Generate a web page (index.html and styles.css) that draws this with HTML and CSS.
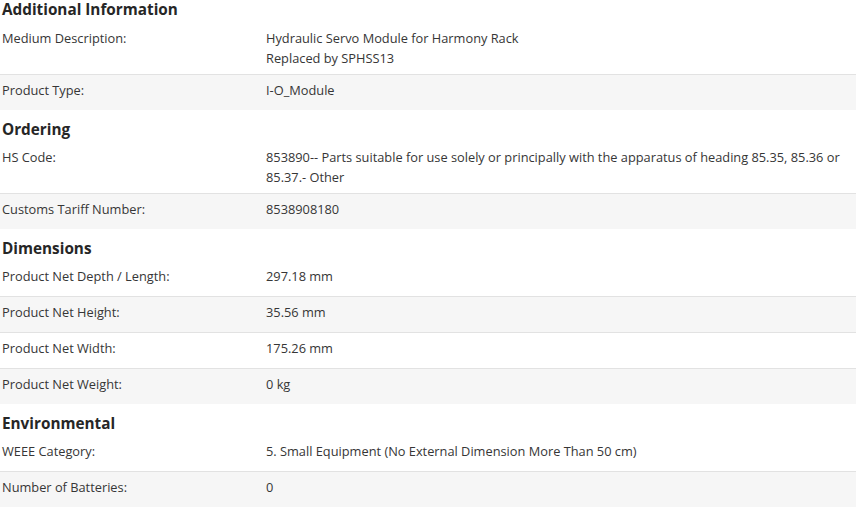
FILE: index.html
```html
<!DOCTYPE html>
<html lang="en">
<head>
<meta charset="utf-8">
<title>Product details</title>
<link rel="stylesheet" href="styles.css">
</head>
<body>
<div class="specs">
  <section class="group">
    <h2 class="group-title">Additional Information</h2>
    <div class="row">
      <div class="label">Medium Description:</div>
      <div class="value">Hydraulic Servo Module for Harmony Rack<br>Replaced by SPHSS13</div>
    </div>
    <div class="row alt">
      <div class="label">Product Type:</div>
      <div class="value">I-O_Module</div>
    </div>
  </section>
  <section class="group">
    <h2 class="group-title">Ordering</h2>
    <div class="row">
      <div class="label">HS Code:</div>
      <div class="value">853890-- Parts suitable for use solely or principally with the apparatus of heading 85.35, 85.36 or 85.37.- Other</div>
    </div>
    <div class="row alt">
      <div class="label">Customs Tariff Number:</div>
      <div class="value">8538908180</div>
    </div>
  </section>
  <section class="group">
    <h2 class="group-title">Dimensions</h2>
    <div class="row">
      <div class="label">Product Net Depth / Length:</div>
      <div class="value">297.18 mm</div>
    </div>
    <div class="row alt">
      <div class="label">Product Net Height:</div>
      <div class="value">35.56 mm</div>
    </div>
    <div class="row">
      <div class="label">Product Net Width:</div>
      <div class="value">175.26 mm</div>
    </div>
    <div class="row alt">
      <div class="label">Product Net Weight:</div>
      <div class="value">0 kg</div>
    </div>
  </section>
  <section class="group">
    <h2 class="group-title">Environmental</h2>
    <div class="row">
      <div class="label">WEEE Category:</div>
      <div class="value">5. Small Equipment (No External Dimension More Than 50 cm)</div>
    </div>
    <div class="row alt">
      <div class="label">Number of Batteries:</div>
      <div class="value">0</div>
    </div>
  </section>
</div>
</body>
</html>
```
FILE: styles.css
```css
html, body {
  margin: 0;
  padding: 0;
  background: #ffffff;
}
body {
  font-family: "Open Sans", "Noto Sans", sans-serif;
  font-size: 12.8px;
  color: #363636;
}
.specs {
  display: flex;
  flex-direction: column;
}
.group-title {
  margin: 0;
  padding: 9px 2px 3px;
  font-size: 15.3px;
  line-height: 20px;
  font-weight: 700;
  color: #262626;
}
.group:first-child .group-title {
  padding-top: 0;
  margin-top: -1px;
  padding-bottom: 4px;
}
.row {
  display: grid;
  grid-template-columns: 264px 1fr;
  min-height: 24px;
  padding: 5px 4px 6px 2px;
  line-height: 20px;
}
.row + .row {
  border-top: 1px solid #e2e2e2;
}
.row.alt {
  background: #f6f6f6;
}
```
